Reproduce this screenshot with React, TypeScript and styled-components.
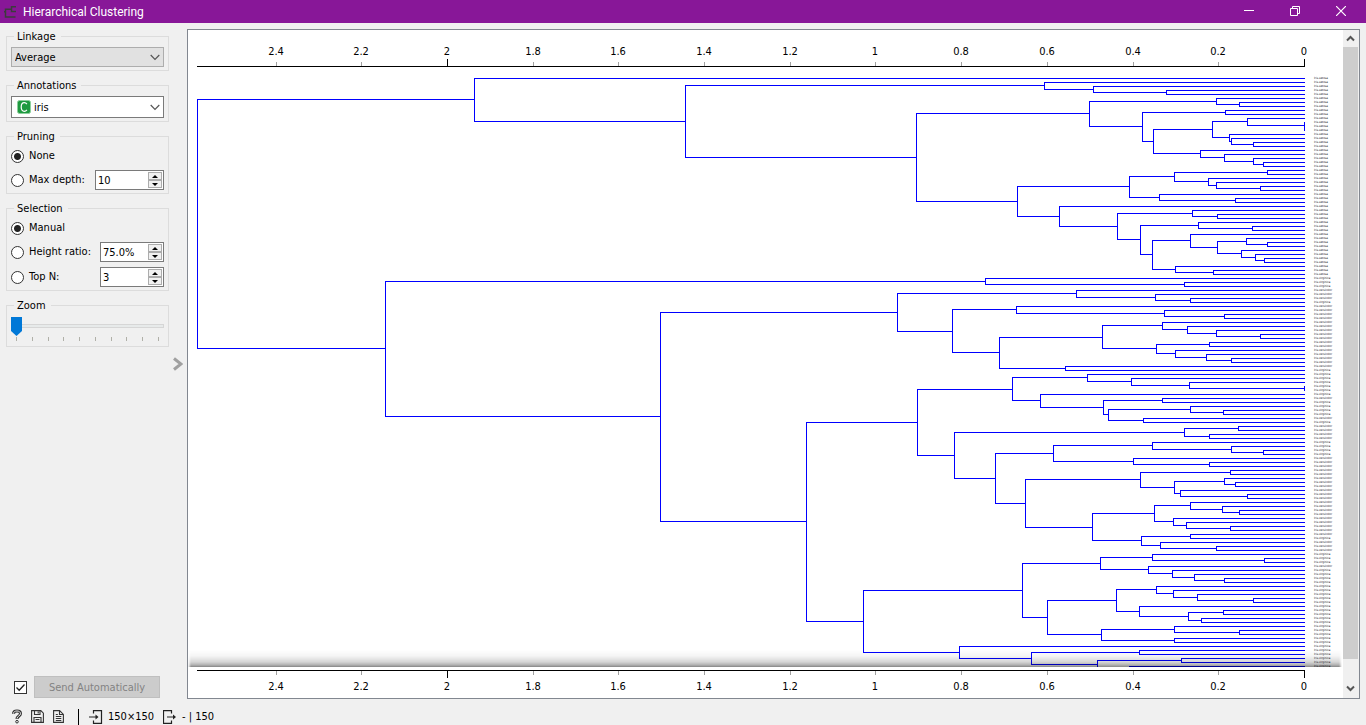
import React from "react";
import styled, { createGlobalStyle } from "styled-components";

const GlobalStyle = createGlobalStyle`
  *, *::before, *::after { box-sizing: border-box; }
  body {
    margin: 0;
    background: #f0f0f0;
    color: #000;
    font-family: "DejaVu Sans Condensed", "DejaVu Sans", sans-serif;
    font-size: 11px;
    line-height: 14px;
  }
  button, input, select { font: inherit; color: inherit; }
`;

/* ---------- data ---------- */

type Tree = 0 | [number, Tree, Tree];

/* Merge distances are stored in fractions of an axis unit; 0 is a single leaf. */
const UNIT = 428.5;
const RANGE = 1107;
const ROW = 4;

const setosa: Tree = [830, 0, [619,
  [260, 0, [211, 0, [138, 0, 0]]],
  [388,
    [215,
      [88, 0, [65, 0, 0]],
      [162, [79, 0, 0],
        [151,
          [92, [57, 0, [0, 0, [0, 0, 0]]], [75, 0, [73, 0, [51, 0, 0]]]],
          [104, 0, [80, 0, [51, 0, [41, 0, 0]]]]]]],
    [287,
      [175,
        [130, [37, 0, 0], [96, 0, [88, 0, [44, 0, 0]]]],
        [145, 0, [69, 0, 0]]],
      [245, 0,
        [187, [112, 0, [87, 0, 0]],
          [164, [106, 0, [52, 0, 0]],
            [152,
              [114, 0, [87, [58, 0, [37, 0, 0]], [63, 0, [49, 0, [40, 0, 0]]]]],
              [129, 0, [91, 0, 0]]]]]]]]]];

const versicolorUpper: Tree = [407,
  [228, 0, [149, 0, [114, 0, 0]]],
  [352,
    [288, 0, [140, 0, [80, 0, 0]]],
    [305,
      [202,
        [142, 0, [117, 0, [88, 0, [44, 0, 0]]]],
        [148, [95, 0, 0], [129, 0, [98, 0, [73, 0, 0]]]]],
      [239, 0, 0]]]];

const mixedMiddle: Tree = [387,
  [292,
    [217, 0, [173, 0, [115, 0, [0, 0, 0]]]],
    [264, 0, [201, [142, 0, 0], [196, [114, 0, [81, 0, 0]], [161, 0, 0]]]]],
  [350,
    [120, [66, 0, 0], [95, 0, 0]],
    [309,
      [251, [152, 0, [73, 0, [41, 0, 0]]], [171, 0, [95, 0, 0]]],
      [279,
        [164, [74, 0, 0],
          [130, [80, 0, [69, 0, 0]], [124, 0, [57, 0, 0]]]],
        [212,
          [150, [114, 0, [82, 0, [65, 0, 0]]], [131, 0, [118, 0, [74, 0, 0]]]],
          [163, [114, 0, 0], [144, 0, [88, 0, 0]]]]]]]];

const virginicaLower: Tree = [441,
  [282,
    [204, [152, 0, [40, 0, 0]], [156, 0, [132, 0, [110, 0, [80, 0, 0]]]]],
    [257,
      [188,
        [148, 0, [131, 0, [107, 0, [51, 0, 0]]]],
        [165, 0, [116, [81, 0, 0], [103, 0, 0]]]],
      [203, [130, 0, [65, 0, 0]], [130, 0, 0]]]],
  [345, 0,
    [273, [165, 0, 0], [207, [123, 0, 0], [175, 0, [110, 0, 0]]]]]];

const iris: Tree = [RANGE, setosa,
  [919,
    [319, 0, [120, 0, 0]],
    [644, versicolorUpper, [498, mixedMiddle, virginicaLower]]]];

const virginicaRanges = [
  [50, 52], [56, 56], [73, 79], [81, 84], [86, 86],
  [91, 94], [115, 115], [119, 121], [123, 149],
];

const speciesOf = (leaf: number) => {
  if (leaf < 50) return "Iris-setosa";
  return virginicaRanges.some(([a, b]) => leaf >= a && leaf <= b)
    ? "Iris-virginica"
    : "Iris-versicolor";
};

const leafNames = Array.from({ length: 150 }, (_, i) => speciesOf(i));

interface Segment { x: number; y: number; w?: number; h?: number }

const pct = (d: number) => (100 * d) / (RANGE + 1);

function layoutTree(root: Tree): Segment[] {
  const out: Segment[] = [];
  let leaf = 0;
  const walk = (node: Tree): { d: number; y: number } => {
    if (node === 0) return { d: -1, y: leaf++ * ROW };
    const [d, left, right] = node;
    const a = walk(left);
    const b = walk(right);
    const top = Math.floor(a.y);
    const bottom = Math.floor(b.y);
    out.push({ x: RANGE - d, y: top, h: bottom - top + 1 });
    if (d > 0) {
      out.push({ x: RANGE - d, y: top, w: d - a.d });
      out.push({ x: RANGE - d, y: bottom, w: d - b.d });
    }
    return { d, y: (a.y + b.y) / 2 };
  };
  walk(root);
  return out;
}

const segments = layoutTree(iris);
const axisValues = [2.4, 2.2, 2, 1.8, 1.6, 1.4, 1.2, 1, 0.8, 0.6, 0.4, 0.2, 0];

/* ---------- window frame ---------- */

const Window = styled.div`
  display: flex;
  flex-direction: column;
  height: 100vh;
  overflow: hidden;
`;

const TitleBar = styled.header`
  display: flex;
  align-items: center;
  flex: none;
  height: 23px;
  padding: 0 8px 0 4px;
  background: #881798;
  color: #fff;
`;

const Title = styled.h1`
  flex: 1;
  margin: 0;
  padding-left: 6px;
  font: 400 12px/16px Roboto, "Liberation Sans", sans-serif;
`;

const WindowButton = styled.button`
  display: grid;
  place-items: center;
  width: 34px;
  height: 22px;
  margin-left: 12px;
  padding: 0 0 2px;
  border: 0;
  background: none;
`;

const Body = styled.main`
  display: flex;
  flex: 1;
  min-height: 0;
  padding: 6px 6px 0;
`;

const Sidebar = styled.aside`
  display: flex;
  flex-direction: column;
  gap: 7px;
  flex: none;
  width: 163px;
`;

const Splitter = styled.button`
  display: grid;
  place-items: center;
  width: 18px;
  padding: 0;
  border: 0;
  background: none;
`;

/* ---------- controls ---------- */

const Group = styled.fieldset`
  display: flex;
  flex-direction: column;
  gap: 5px;
  min-width: 0;
  margin: 0;
  padding: 4px 4px 3px;
  border: 1px solid #dcdcdc;
`;

const GroupTitle = styled.legend`
  height: 14px;
  margin-left: 3px;
  padding: 1px 5px 0 3px;
`;

const Combo = styled.div`
  position: relative;
  display: flex;
`;

const Select = styled.select<{ $plain?: boolean }>`
  appearance: none;
  width: 100%;
  height: ${(p) => (p.$plain ? 22 : 20)}px;
  padding: 2px 20px 0 ${(p) => (p.$plain ? 22 : 3)}px;
  border: 1px solid ${(p) => (p.$plain ? "#7a7a7a" : "#adadad")};
  border-radius: 0;
  background: ${(p) => (p.$plain ? "#fff" : "#e1e1e1")};
`;

const ComboArrow = styled.svg`
  position: absolute;
  right: 4px;
  top: 50%;
  margin-top: -3px;
  pointer-events: none;
`;

const TypeBadge = styled.svg`
  position: absolute;
  left: 6px;
  top: 50%;
  margin-top: -7px;
  pointer-events: none;
`;

const OptionRow = styled.div<{ $tall?: boolean }>`
  display: flex;
  align-items: center;
  justify-content: space-between;
  height: ${(p) => (p.$tall ? 20 : 18)}px;
`;

const OptionLabel = styled.label`
  display: flex;
  align-items: center;
  gap: 5px;
  white-space: nowrap;
`;

const Radio = styled.input`
  appearance: none;
  width: 13px;
  height: 13px;
  margin: 0;
  border: 1px solid #333;
  border-radius: 50%;
  background: #fff;
  &:checked {
    background: radial-gradient(circle, #222 3px, #fff 4px);
  }
`;

const SpinFrame = styled.div<{ $wide?: boolean }>`
  display: flex;
  flex: none;
  width: ${(p) => (p.$wide ? 69 : 64)}px;
  height: 20px;
  padding: 1px;
  border: 1px solid #7a7a7a;
  background: #fff;
`;

const SpinInput = styled.input`
  flex: 1;
  min-width: 0;
  padding: 2px 0 0 1px;
  border: 0;
  outline: 0;
  background: none;
`;

const SpinButtons = styled.div`
  display: grid;
  grid-template-rows: 1fr 1fr;
  width: 14px;
`;

const SpinButton = styled.button`
  display: grid;
  place-items: center;
  min-height: 0;
  padding: 0;
  border: 1px solid #acacac;
  background: #f0f0f0;
`;

const Slider = styled.input`
  appearance: none;
  width: 100%;
  height: 20px;
  margin: 0;
  background: none;
  &::-webkit-slider-runnable-track {
    height: 4px;
    border: 1px solid #d6d6d6;
    border-left: 0;
    background: #e7eaea;
  }
  &::-webkit-slider-thumb {
    appearance: none;
    width: 11px;
    height: 19px;
    margin-top: -8px;
    background: #0078d7;
    clip-path: polygon(0 0, 100% 0, 100% 74%, 50% 100%, 0 74%);
  }
`;

const Ticks = styled.div`
  display: flex;
  justify-content: space-between;
  height: 6px;
  margin-top: -4px;
  padding: 0 5px;
`;

const Tick = styled.i`
  width: 1px;
  height: 4px;
  background: #b0b0a8;
`;

const SendRow = styled.div`
  display: flex;
  align-items: center;
  gap: 7px;
  margin-top: auto;
  padding: 0 9px 1px 8px;
`;

const CheckLabel = styled.label`
  position: relative;
  display: flex;
`;

const CheckInput = styled.input`
  appearance: none;
  width: 13px;
  height: 13px;
  margin: 0;
  border: 1px solid #333;
  background: #fff;
`;

const CheckMark = styled.svg`
  position: absolute;
  inset: 0;
  pointer-events: none;
`;

const SendButton = styled.button`
  flex: 1;
  height: 22px;
  padding: 2px 0 0;
  border: 1px solid #bfbfbf;
  background: #ccc;
  color: #838383;
`;

/* ---------- dendrogram ---------- */

const Canvas = styled.section`
  display: flex;
  flex: 1;
  min-width: 0;
  border: 1px solid #828790;
  background: #fff;
`;

const Chart = styled.div`
  display: flex;
  flex-direction: column;
  flex: 1;
  min-width: 0;
`;

const Axis = styled.div<{ $bottom?: boolean }>`
  flex: none;
  height: ${(p) => (p.$bottom ? 31 : 37)}px;
  padding: ${(p) => (p.$bottom ? "3px" : "0")} 38px 0 9px;
`;

const AxisSvg = styled.svg<{ $bottom?: boolean }>`
  display: block;
  width: 100%;
  height: ${(p) => (p.$bottom ? 28 : 37)}px;
  overflow: visible;
  text-anchor: middle;
`;

const Viewport = styled.div`
  position: relative;
  display: flex;
  flex: 1;
  min-height: 0;
  padding: 0 1px 0 9px;
  overflow: hidden;
`;

const TreeSvg = styled.svg`
  flex: 1;
  min-width: 0;
  height: 608px;
  margin-top: 11px;
  fill: #0000ff;
  shape-rendering: crispEdges;
`;

const Leaves = styled.ol`
  flex: none;
  width: 37px;
  margin: 9px 0 0;
  padding: 0 0 0 9px;
  list-style: none;
  font-size: 3px;
  line-height: 4px;
  color: #112;
`;

const EdgeShadow = styled.div`
  position: absolute;
  left: 0;
  right: 1px;
  bottom: 0;
  height: 17px;
  background: linear-gradient(
    rgba(0, 0, 0, 0),
    rgba(0, 0, 0, 0.04) 35%,
    rgba(0, 0, 0, 0.16) 70%,
    rgba(0, 0, 0, 0.3) 88%,
    rgba(0, 0, 0, 0.48)
  );
  mask-image: linear-gradient(90deg, transparent, #000 3px calc(100% - 3px), transparent);
`;

const ScrollBar = styled.div`
  display: flex;
  flex-direction: column;
  flex: none;
  width: 16px;
  padding-right: 1px;
  background: #f0f0f0;
`;

const ScrollButton = styled.button<{ $tall?: boolean }>`
  display: grid;
  place-items: center;
  height: ${(p) => (p.$tall ? 19 : 17)}px;
  padding: 0;
  border: 0;
  background: none;
`;

const ScrollTrack = styled.div`
  flex: 1;
  padding-bottom: 20px;
`;

const ScrollThumb = styled.div`
  height: 100%;
  background: #cdcdcd;
`;

/* ---------- status bar ---------- */

const StatusBar = styled.footer`
  display: flex;
  align-items: center;
  flex: none;
  height: 26px;
  padding: 9px 10px 0;
`;

const StatusButton = styled.button`
  display: grid;
  place-items: center;
  width: 21px;
  padding: 0;
  border: 0;
  background: none;
  &:first-child { width: 14px; margin-right: 3px; }
`;

const Divider = styled.i`
  width: 1px;
  height: 16px;
  margin: 0 10px 0 9px;
  background: #000;
`;

const StatusItem = styled.span`
  display: flex;
  align-items: center;
  gap: 5px;
  margin-right: 9px;
`;

/* ---------- components ---------- */

function ComboBox({ label, value, badge }: { label: string; value: string; badge?: boolean }) {
  return (
    <Combo>
      <Select $plain={badge} aria-label={label} defaultValue={value}>
        <option>{value}</option>
      </Select>
      {badge && (
        <TypeBadge width="14" height="14" viewBox="0 0 14 14" aria-hidden="true">
          <rect x="0.5" y="0.5" width="13" height="13" rx="2" fill="#1f9a40" stroke="#8ccf9c" />
          <path d="M9.900 4.200C9.200 3.200 8.400 2.700 7.300 2.700 5.400 2.700 4.200 4.400 4.200 7s1.200 4.300 3.100 4.300c1.100 0 1.900-.5 2.600-1.500" fill="none" stroke="#fff" strokeWidth="1.200" />
        </TypeBadge>
      )}
      <ComboArrow width="10" height="7" viewBox="0 0 10 7" aria-hidden="true">
        <path d="M0.700 1 5 5.300 9.300 1" fill="none" stroke="#555" strokeWidth="1.200" />
      </ComboArrow>
    </Combo>
  );
}

function Spin({ label, value, wide }: { label: string; value: string; wide?: boolean }) {
  return (
    <SpinFrame $wide={wide}>
      <SpinInput aria-label={label} defaultValue={value} />
      <SpinButtons>
        <SpinButton aria-label={`Increase ${label}`}>
          <svg width="6" height="3" viewBox="0 0 6 3"><path d="M3 0 6 3H0z" /></svg>
        </SpinButton>
        <SpinButton aria-label={`Decrease ${label}`}>
          <svg width="6" height="3" viewBox="0 0 6 3"><path d="M3 3 6 0H0z" /></svg>
        </SpinButton>
      </SpinButtons>
    </SpinFrame>
  );
}

function Option(props: { group: string; text: string; checked?: boolean; spin?: string; wide?: boolean }) {
  return (
    <OptionRow $tall={props.spin !== undefined}>
      <OptionLabel>
        <Radio type="radio" name={props.group} defaultChecked={props.checked} />
        {props.text}
      </OptionLabel>
      {props.spin !== undefined && <Spin label={props.text} value={props.spin} wide={props.wide} />}
    </OptionRow>
  );
}

function DistanceAxis({ bottom }: { bottom?: boolean }) {
  const line = bottom ? 0 : 36;
  return (
    <Axis $bottom={bottom}>
      <AxisSvg $bottom={bottom} aria-label={bottom ? "Bottom axis" : "Top axis"}>
        <g shapeRendering="crispEdges">
          {axisValues.map((v) => {
            const major = v % 2 === 0;
            const size = major ? 7 : 4;
            return (
              <rect
                key={v}
                x={`${pct(RANGE - Math.round(v * UNIT))}%`}
                y={bottom ? 1 : line - size}
                width="1"
                height={size}
                fill={major ? "#000" : "#a0a0a0"}
              />
            );
          })}
          <rect x="0" y={line} width="100%" height="1" />
        </g>
        {axisValues.map((v) => (
          <text key={v} x={`${pct(RANGE - Math.round(v * UNIT))}%`} y={bottom ? 20 : 25}>
            {v}
          </text>
        ))}
      </AxisSvg>
    </Axis>
  );
}

function Dendrogram() {
  return (
    <Viewport>
      <TreeSvg role="img" aria-label="Dendrogram">
        {segments.map((s, i) => (
          <rect
            key={i}
            x={`${pct(s.x)}%`}
            y={s.y}
            width={s.w === undefined ? 1 : `${pct(s.w)}%`}
            height={s.h ?? 1}
          />
        ))}
      </TreeSvg>
      <Leaves>
        {leafNames.map((name, i) => <li key={i}>{name}</li>)}
      </Leaves>
      <EdgeShadow />
    </Viewport>
  );
}

export default function App() {
  return (
    <>
      <GlobalStyle />
      <Window>
        <TitleBar>
          <svg width="13" height="14" viewBox="0 0 13 14" fill="none" stroke="#3c3c3c" strokeWidth="1.500" aria-hidden="true">
            <path d="M12 1.700H7.500V6.500H12M7.500 4.200H1.500V12H11.500M0 6.800H1.500" />
          </svg>
          <Title>Hierarchical Clustering</Title>
          <WindowButton aria-label="Minimize">
            <svg width="10" height="10"><rect y="4" width="10" height="1" fill="#fff" /></svg>
          </WindowButton>
          <WindowButton aria-label="Restore">
            <svg width="10" height="10" fill="none" stroke="#fff">
              <path d="M0.500 2.500h7v7h-7zM2.500 2.500v-2h7v7h-2" />
            </svg>
          </WindowButton>
          <WindowButton aria-label="Close">
            <svg width="10" height="10" stroke="#fff" strokeWidth="1.200">
              <path d="M0 0 10 10M10 0 0 10" />
            </svg>
          </WindowButton>
        </TitleBar>

        <Body>
          <Sidebar>
            <Group>
              <GroupTitle>Linkage</GroupTitle>
              <ComboBox label="Linkage" value="Average" />
            </Group>
            <Group>
              <GroupTitle>Annotations</GroupTitle>
              <ComboBox label="Annotations" value="iris" badge />
            </Group>
            <Group>
              <GroupTitle>Pruning</GroupTitle>
              <Option group="pruning" text="None" checked />
              <Option group="pruning" text="Max depth:" spin="10" wide />
            </Group>
            <Group>
              <GroupTitle>Selection</GroupTitle>
              <Option group="selection" text="Manual" checked />
              <Option group="selection" text="Height ratio:" spin="75.0%" />
              <Option group="selection" text="Top N:" spin="3" />
            </Group>
            <Group>
              <GroupTitle>Zoom</GroupTitle>
              <Slider type="range" aria-label="Zoom" min="0" max="9" defaultValue="0" />
              <Ticks>
                {Array.from({ length: 10 }, (_, i) => <Tick key={i} />)}
              </Ticks>
            </Group>
            <SendRow>
              <CheckLabel>
                <CheckInput type="checkbox" defaultChecked aria-label="Send Automatically" />
                <CheckMark width="13" height="13" viewBox="0 0 13 13">
                  <path d="M2.500 6.500 5.200 9.200 10.500 3.500" fill="none" stroke="#222" strokeWidth="1.300" />
                </CheckMark>
              </CheckLabel>
              <SendButton disabled>Send Automatically</SendButton>
            </SendRow>
          </Sidebar>

          <Splitter aria-label="Toggle control area">
            <svg width="10" height="14" viewBox="0 0 10 14">
              <path d="M1 1.500 8 7 1 12.500" fill="none" stroke="#a0a0a0" strokeWidth="3" />
            </svg>
          </Splitter>

          <Canvas>
            <Chart>
              <DistanceAxis />
              <Dendrogram />
              <DistanceAxis bottom />
            </Chart>
            <ScrollBar>
              <ScrollButton aria-label="Scroll up">
                <svg width="9" height="7" viewBox="0 0 9 7"><path d="M1 5.500 4.500 2 8 5.500" fill="none" stroke="#555" strokeWidth="2" /></svg>
              </ScrollButton>
              <ScrollTrack><ScrollThumb /></ScrollTrack>
              <ScrollButton $tall aria-label="Scroll down">
                <svg width="9" height="7" viewBox="0 0 9 7"><path d="M1 1.500 4.500 5 8 1.500" fill="none" stroke="#555" strokeWidth="2" /></svg>
              </ScrollButton>
            </ScrollBar>
          </Canvas>
        </Body>

        <StatusBar>
          <StatusButton aria-label="Help">
            <svg width="12" height="15" viewBox="0 0 12 15" fill="none">
              <path d="M2.500 4.800C2.500 2.800 4 2 6 2s3.500 1 3.500 2.700C9.500 7 6 7 6 10" stroke="#333" strokeWidth="3" />
              <path d="M2.500 4.500C2.500 2.800 4 2 6 2s3.500 1 3.500 2.700C9.500 7 6 7 6 9.600" stroke="#f0f0f0" strokeWidth="1" />
              <circle cx="6" cy="12.700" r="1.300" stroke="#333" />
            </svg>
          </StatusButton>
          <StatusButton aria-label="Save image">
            <svg width="13" height="13" viewBox="0 0 13 13" fill="none" stroke="#333" strokeWidth="1.100">
              <path d="M.6.600h9.200l2.600 2.600v9.200H.6zM3.500.600v3.900h5.500V.600M7.200 1.500v2M3 12V7.500h7V12M4.500 9.500h4" />
            </svg>
          </StatusButton>
          <StatusButton aria-label="Report">
            <svg width="11" height="13" viewBox="0 0 11 13" fill="none" stroke="#333" strokeWidth="1.100">
              <path d="M.6.600h6l3.800 3.800v8H.6zM6.500.600v3.900h3.800M2.800 6.500h5.500M2.800 8.500h5.500M2.800 10.500h5.500M2.800 4.500h2" />
            </svg>
          </StatusButton>
          <Divider />
          <StatusItem>
            <svg width="14" height="14" viewBox="0 0 14 14" fill="none" stroke="#222" strokeWidth="1.200">
              <path d="M4.500 3.500V.7h8v12.600h-8v-2.800M0 7h8" />
              <path d="M6.500 4.500 9.500 7l-3 2.500z" fill="#222" stroke="none" />
            </svg>
            150×150
          </StatusItem>
          <StatusItem>
            <svg width="14" height="14" viewBox="0 0 14 14" fill="none" stroke="#222" strokeWidth="1.200">
              <path d="M8.500 3.500V.7h-8v12.600h8v-2.800M4 7h8" />
              <path d="M10 4.500 13 7l-3 2.500z" fill="#222" stroke="none" />
            </svg>
            - | 150
          </StatusItem>
        </StatusBar>
      </Window>
    </>
  );
}
